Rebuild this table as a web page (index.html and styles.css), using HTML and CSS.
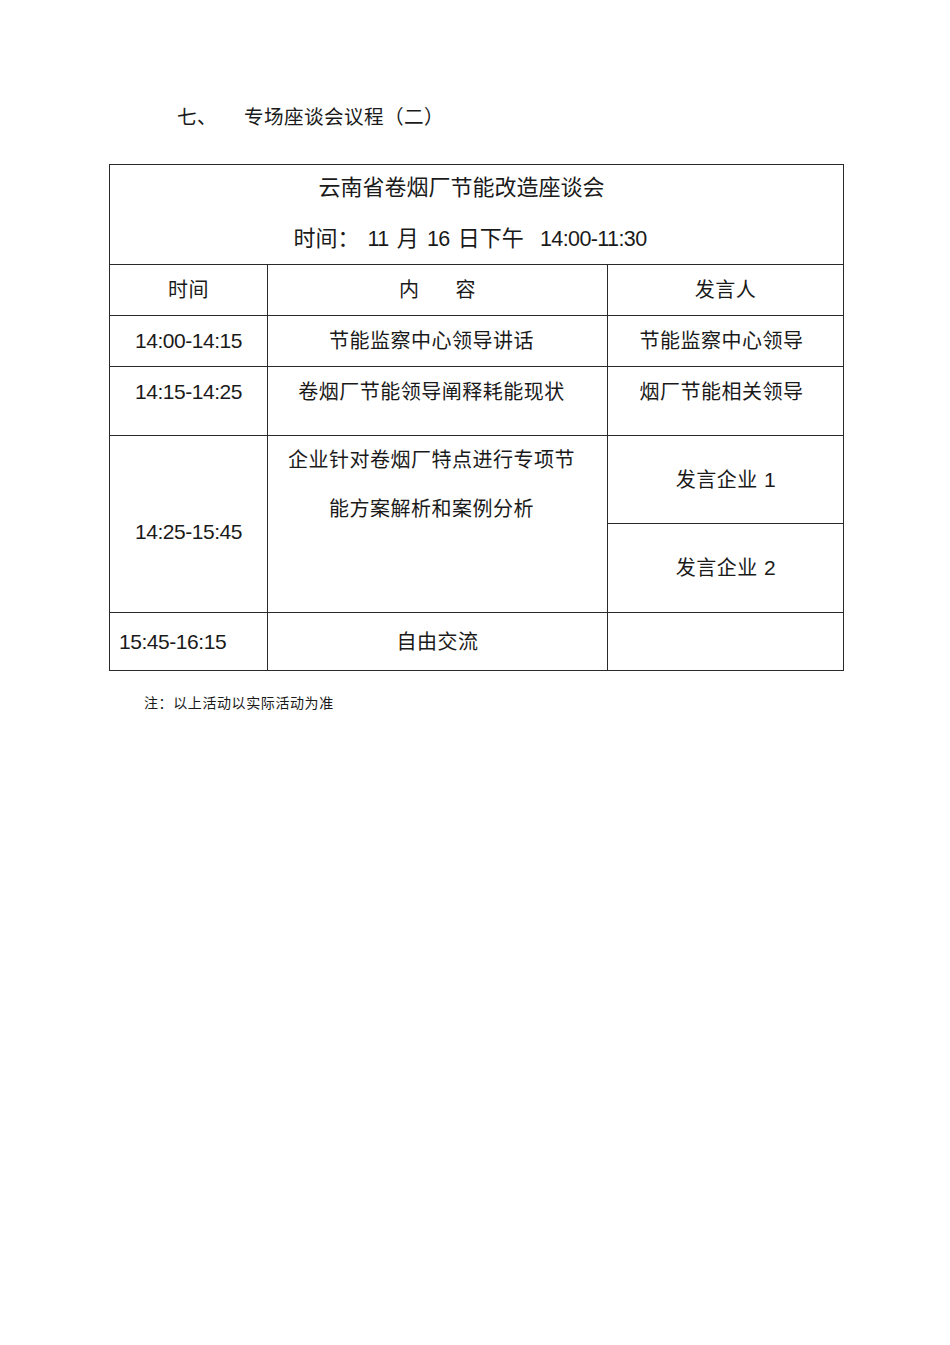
FILE: index.html
```html
<!DOCTYPE html>
<html lang="zh-CN">
<head>
<meta charset="utf-8">
<title>专场座谈会议程（二）</title>
<link rel="stylesheet" href="styles.css">
</head>
<body>
<div class="page">
  <h2 class="heading"><span class="num-cn">七、</span><span class="heading-text">专场座谈会议程（二）</span></h2>
  <table class="agenda">
    <colgroup>
      <col class="c1">
      <col class="c2">
      <col class="c3">
    </colgroup>
    <tr class="r-head">
      <td colspan="3" class="banner">
        <div class="banner-line">云南省卷烟厂节能改造座谈会</div>
        <div class="banner-line">时间： <span class="nb">11</span> 月 <span class="nb">16</span> 日下午&nbsp; <span class="nb">14:00-11:30</span></div>
      </td>
    </tr>
    <tr class="r-cols">
      <td>时间</td>
      <td>内<span class="gap"></span>容</td>
      <td>发言人</td>
    </tr>
    <tr class="r-1">
      <td><span class="n">14:00-14:15</span></td>
      <td class="shift">节能监察中心领导讲话</td>
      <td class="shift2">节能监察中心领导</td>
    </tr>
    <tr class="r-2">
      <td class="top"><span class="n">14:15-14:25</span></td>
      <td class="top shift">卷烟厂节能领导阐释耗能现状</td>
      <td class="top shift2">烟厂节能相关领导</td>
    </tr>
    <tr class="r-3a">
      <td rowspan="2" class="low"><span class="n">14:25-15:45</span></td>
      <td rowspan="2" class="top multi shift">企业针对卷烟厂特点进行专项节<br>能方案解析和案例分析</td>
      <td>发言企业 <span class="n">1</span></td>
    </tr>
    <tr class="r-3b">
      <td>发言企业 <span class="n">2</span></td>
    </tr>
    <tr class="r-4">
      <td class="left"><span class="n">15:45-16:15</span></td>
      <td>自由交流</td>
      <td></td>
    </tr>
  </table>
  <p class="note">注：以上活动以实际活动为准</p>
</div>
</body>
</html>
```

FILE: styles.css
```css
html, body {
  margin: 0;
  padding: 0;
  background: #fff;
}
body {
  font-family: "Liberation Sans", "Noto Sans CJK SC", sans-serif;
  color: #1a1a1a;
}
.page {
  padding: 100px 0 0 109px;
}
.heading {
  margin: 0 0 0 68px;
  font-weight: normal;
  font-size: 19.6px;
  line-height: 34px;
  height: 34px;
  letter-spacing: 0.4px;
}
.heading-text {
  margin-left: 27px;
}
.agenda {
  margin-top: 30px;
  border-collapse: collapse;
  table-layout: fixed;
  width: 734px;
  font-size: 20px;
  letter-spacing: 0.5px;
}
.c1 { width: 158px; }
.c2 { width: 340px; }
.c3 { width: 236px; }
.agenda td {
  border: 1px solid #2a2a2a;
  padding: 0;
  text-align: center;
  vertical-align: middle;
  line-height: 28px;
}
.banner {
  height: 99px;
  vertical-align: top !important;
  font-size: 22px;
  letter-spacing: 0;
}
.banner-line {
  line-height: 51px;
  height: 51px;
  margin-top: -3px;
  padding-right: 30px;
}
.banner-line + .banner-line {
  margin-top: 0;
  height: 50px;
  padding-right: 13px;
  word-spacing: 2px;
}
.nb {
  font-size: 21.5px;
  letter-spacing: -0.6px;
  line-height: 1;
}
.n {
  font-size: 21px;
  letter-spacing: -0.45px;
  line-height: 1;
}
.gap {
  display: inline-block;
  width: 36px;
}
.r-cols td { height: 50px; }
.r-1 td { height: 50px; }
.r-2 td { height: 57px; }
.agenda td.top {
  vertical-align: top;
  padding-top: 11px;
}
.agenda td.multi {
  line-height: 49px;
  padding-top: 0;
}
.agenda td.low {
  padding-top: 15px;
}
.agenda td.left {
  text-align: left;
  padding-left: 9px;
}
.shift { padding-right: 12px !important; }
.shift2 { padding-right: 8px !important; }
.r-3a td { height: 87px; }
.r-3b td { height: 88px; }
.r-4 td { height: 57px; }
.note {
  margin: 22px 0 0 35px;
  font-size: 14px;
  line-height: 20px;
  letter-spacing: 0.6px;
}
```
